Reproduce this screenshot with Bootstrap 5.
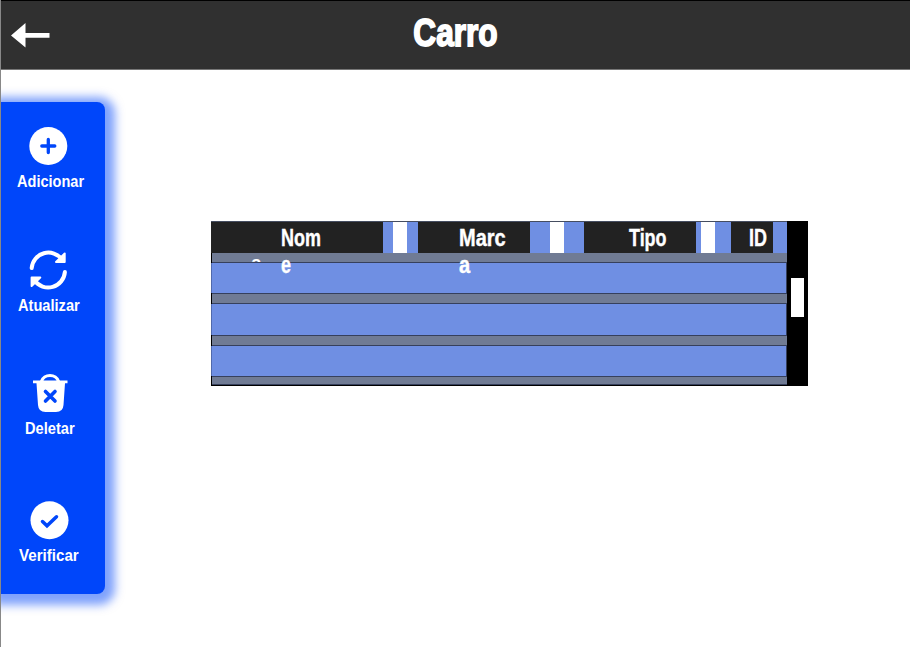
<!DOCTYPE html>
<html lang="pt-BR">
<head>
<meta charset="utf-8">
<meta name="viewport" content="width=device-width, initial-scale=1">
<title>Carro</title>
<link href="https://cdn.jsdelivr.net/npm/bootstrap@5.3.0/dist/css/bootstrap.min.css" rel="stylesheet">
<style>
body{height:647px;font-family:"Liberation Sans",sans-serif;font-weight:700;border-left:1px solid #888;background:#fff}
.topbar{height:70px;margin-left:-1px;background:#303030;border-top:1px solid #000;border-bottom:1px solid #777;border-left:1px solid #222;display:grid;grid-template-columns:100px 1fr 100px}
.topbar h1{font-size:39px;line-height:64px;font-weight:700;-webkit-text-stroke:1.8px #fff;transform:scaleX(.81)}
.back{padding:22px 0 0 10px}
.back svg,.tool svg{display:block}
.side{width:105px;height:492px;margin:32px 0 0 -1px;background:#0046fa;border-left:1px solid #0038c4;border-radius:0 8px 8px 0;box-shadow:2px 3px 10px 8px rgba(0,70,250,.5);padding-top:24px}
.tool{height:123.5px;font-size:17px;line-height:20px}
.tool svg{width:40px;height:40px;margin:0 0 6px 27px}
.tool span{display:block;white-space:nowrap;transform-origin:0 0}
.add span{margin-left:16px;transform:scaleX(.855)}
.refresh span{margin-left:17px;transform:scaleX(.86)}
.trash{height:126.500px}
.trash span{margin-left:24px;transform:scaleX(.86)}
.verify svg{margin-left:28px}
.verify span{margin-left:18px;transform:scaleX(.89)}
.grid-box{width:597px;height:165px;margin:151px 0 0 106px;background:#000}
.rows{width:576px}
.heads{height:32px;position:relative;z-index:1;background:#6f8fe3;border-top:1px solid #454d60}
.hcell{background:#222;color:#fff;font-size:23px;line-height:27px;padding-top:3px;height:31px}
.hcell span{display:inline-block;transform-origin:0 0;transform:scaleX(.78);-webkit-text-stroke:.4px #fff}
.hcell .wide{transform:scaleX(.87)}
.sep{width:14px;height:31px;background:#fff}
.gap-row{height:10px;margin-left:1px;background:#707b94;border-bottom:1px solid #36405c;overflow:hidden}
.gap-row.mid{height:11px;border-top:1px solid #36405c}
.gap-row.last{height:9px;border-top:1px solid #36405c}
.gap-row span{display:block;margin-left:39px;font-size:19px;line-height:20px}
.data-row{height:30px;background:#6f8fe3;border-left:1px solid #5069ab;border-right:1px solid #36405c}
.data-row.tall{height:31px}
.track{width:21px;padding:57px 0 0 4px}
.thumb{width:13px;height:39px;background:#fff}
</style>
<script src="https://cdn.jsdelivr.net/npm/bootstrap@5.3.0/dist/js/bootstrap.bundle.min.js"></script>
</head>
<body class="overflow-hidden">
<header class="topbar text-white">
<a class="back" href="#" aria-label="Voltar"><svg width="40" height="26" fill="#fff"><path d="M0 12.500 14.500 0v10h24v4.800h-24V24.500z"/></svg></a>
<h1 class="m-0 text-center">Carro</h1>
</header>
<div class="d-flex align-items-start">
<nav class="side text-white flex-shrink-0">
<div class="tool add"><svg viewBox="0 0 40 40"><circle cx="20.300" cy="20" r="19" fill="#fff"/><path d="M20.300 13.500v13M13.800 20h13" stroke="#0046fa" stroke-width="3.300" stroke-linecap="round"/></svg><span>Adicionar</span></div>
<div class="tool refresh"><svg viewBox="0 0 40 40" fill="none" stroke="#fff" stroke-width="4" stroke-linecap="round"><path d="M3.700 18A16.800 16.800 0 0 1 34 9.500M36.900 22A16.800 16.800 0 0 1 6.500 30.500"/><path d="M36.700 3.500v8.500h-8.700zM3.600 36V27.500h8.700z" fill="#fff" stroke-width="2" stroke-linejoin="round"/></svg><span>Atualizar</span></div>
<div class="tool trash"><svg viewBox="0 0 40 40"><path d="M13.500 8.500C15.500 .5 28.500 .5 30.500 8.500" fill="none" stroke="#fff" stroke-width="3.200"/><path d="M5 7.500h34.500v2.700H37L35.500 32q-.5 7-7.500 7H17.500q-7 0-7.500-7L8.500 10.200H5z" fill="#fff"/><path d="m17.500 18.500 9.500 9.500m0-9.500L17.500 28" stroke="#0046fa" stroke-width="3.600" stroke-linecap="round"/></svg><span>Deletar</span></div>
<div class="tool verify"><svg viewBox="0 0 40 40"><circle cx="20.500" cy="20.300" r="19" fill="#fff"/><path d="m13.500 21.500 4.500 4.300L27.500 16.800" fill="none" stroke="#0046fa" stroke-width="3.500" stroke-linecap="round"/></svg><span>Verificar</span></div>
</nav>
<main class="grid-box d-flex">
<div class="rows">
<div class="heads d-flex">
<div class="hcell" style="width:171.500px;padding-left:70px"><span>Nom<br>e</span></div><div class="sep" style="margin:0 11px 0 10.500px"></div>
<div class="hcell" style="width:112px;padding-left:41px"><span class="wide">Marc<br>a</span></div><div class="sep" style="margin:0 20px"></div>
<div class="hcell" style="width:112px;padding-left:45px"><span>Tipo</span></div><div class="sep" style="margin:0 16px 0 5px"></div>
<div class="hcell" style="width:42px;padding-left:18px"><span>ID</span></div>
</div>
<div class="gap-row text-white"><span>a</span></div><div class="data-row"></div>
<div class="gap-row mid"></div><div class="data-row tall"></div>
<div class="gap-row mid"></div><div class="data-row"></div>
<div class="gap-row last"></div>
</div>
<div class="track"><div class="thumb"></div></div>
</main>
</div>
</body>
</html>
